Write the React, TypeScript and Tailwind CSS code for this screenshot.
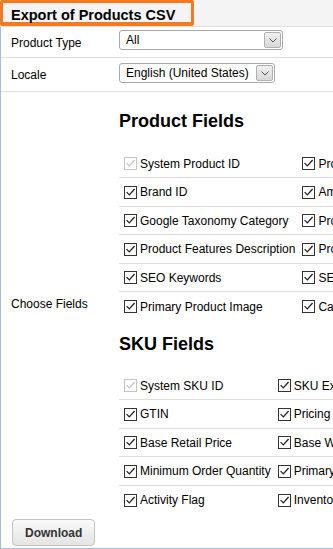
import React from "react";

type Field = { label: string; locked?: boolean };

const productFields: Field[][] = [
  [{ label: "System Product ID", locked: true }, { label: "Product Name" }, { label: "Product URL" }],
  [{ label: "Brand ID" }, { label: "Amazon Category" }, { label: "Brand Name" }],
  [{ label: "Google Taxonomy Category" }, { label: "Product Description" }, { label: "Product Tags" }],
  [{ label: "Product Features Description" }, { label: "Product Specifications" }, { label: "Warranty" }],
  [{ label: "SEO Keywords" }, { label: "SEO Title" }, { label: "SEO Description" }],
  [{ label: "Primary Product Image" }, { label: "Category" }, { label: "Alternate Images" }],
];

const skuFields: Field[][] = [
  [{ label: "System SKU ID", locked: true }, { label: "SKU External ID" }, { label: "SKU Name" }],
  [{ label: "GTIN" }, { label: "Pricing Unit" }, { label: "MPN" }],
  [{ label: "Base Retail Price" }, { label: "Base Wholesale Price" }, { label: "MSRP" }],
  [{ label: "Minimum Order Quantity" }, { label: "Primary SKU Image" }, { label: "Weight" }],
  [{ label: "Activity Flag" }, { label: "Inventory Level" }, { label: "Dimensions" }],
];

function CheckBox({ locked }: { locked?: boolean }) {
  const stroke = locked ? "#c4c4c4" : "#333333";
  const check = locked ? "#c4c4c4" : "#222222";
  return (
    <svg width="13" height="13" viewBox="0 0 13 13" className="shrink-0">
      <rect x="0.5" y="0.5" width="12" height="12" fill="#ffffff" stroke={stroke} />
      <path d="M2.6 6.1 L5.3 8.9 L10.6 3" fill="none" stroke={check} strokeWidth="1.3" />
    </svg>
  );
}

function Select({ value, width }: { value: string; width: string }) {
  return (
    <div className={`flex h-[20px] ${width} rounded-[3px] border border-[#a9a9a9] bg-white p-px`}>
      <span className="flex-1 pl-[5px] text-[12px] leading-[16px] text-black">{value}</span>
      <span className="flex w-[17px] items-center justify-center rounded-[2px] border border-[#b0b0b0] bg-gradient-to-b from-[#f0f0f0] to-[#d8d8d8]">
        <svg width="8" height="5" viewBox="0 0 8 5">
          <path d="M0.5 0.5 L4 4 L7.5 0.5" fill="none" stroke="#555" strokeWidth="1" />
        </svg>
      </span>
    </div>
  );
}

function FieldGrid({ rows }: { rows: Field[][] }) {
  return (
    <div className="grid w-max grid-cols-[auto_auto_auto]">
      {rows.map((row, r) =>
        row.map((f, c) => (
          <div
            key={`${r}-${c}`}
            className={`flex items-center gap-[3px] pl-[5px] pr-[2px] ${r % 2 === 0 ? "h-[28px]" : "h-[29px]"} ${
              r < rows.length - 1 ? "border-b border-[#dcdcdc]" : ""
            }`}
          >
            <CheckBox locked={f.locked} />
            <span className="whitespace-nowrap text-[12px] leading-[14px] text-black">{f.label}</span>
          </div>
        ))
      )}
    </div>
  );
}

export default function App() {
  return (
    <div className="h-[549px] w-[333px] overflow-hidden bg-white font-['Liberation_Sans',Arial,sans-serif]">
      <div className="h-[27px] w-max min-w-full border-b border-[#e0e0e0] bg-[#f4f4f4]">
        <div className="h-[26px] w-[194px] rounded-[2px] border-[3px] border-b-4 border-[#f5791e] pl-[8px]">
          <span className="text-[14.5px] font-bold leading-[17px] text-black">Export of Products CSV</span>
        </div>
      </div>

      <div className="w-max min-w-full border-b border-l border-[#a5c0df]">
        <div className="flex h-[31px] border-b border-[#dedede]">
          <div className="flex w-[118px] items-center pl-[10px] pt-[1px] text-[12px] text-black">Product Type</div>
          <div className="pt-[3px]">
            <Select value="All" width="w-[164px]" />
          </div>
        </div>

        <div className="flex h-[34px] border-b border-[#dedede]">
          <div className="flex w-[118px] items-center pl-[10px] text-[12px] text-black">Locale</div>
          <div className="pt-[5px]">
            <Select value="English (United States)" width="w-[156px]" />
          </div>
        </div>

        <div className="flex">
          <div className="flex w-[118px] items-center pl-[10px] text-[12px] text-black">Choose Fields</div>
          <div className="pb-px pt-[19px]">
            <h2 className="text-[18px] font-bold leading-[21px] text-black">Product Fields</h2>
            <div className="mt-[18px]">
              <FieldGrid rows={productFields} />
            </div>
            <h2 className="mt-[13px] text-[18px] font-bold leading-[21px] text-black">SKU Fields</h2>
            <div className="mt-[17px]">
              <FieldGrid rows={skuFields} />
            </div>
          </div>
        </div>

        <div className="h-[33px] pl-[11px] pt-[4px]">
          <button className="h-[27px] rounded-[4px] border border-[#c4c4c4] bg-gradient-to-b from-[#fafafa] to-[#e4e4e4] px-[12px] text-[12px] font-bold text-[#333]">
            Download
          </button>
        </div>
      </div>
    </div>
  );
}
